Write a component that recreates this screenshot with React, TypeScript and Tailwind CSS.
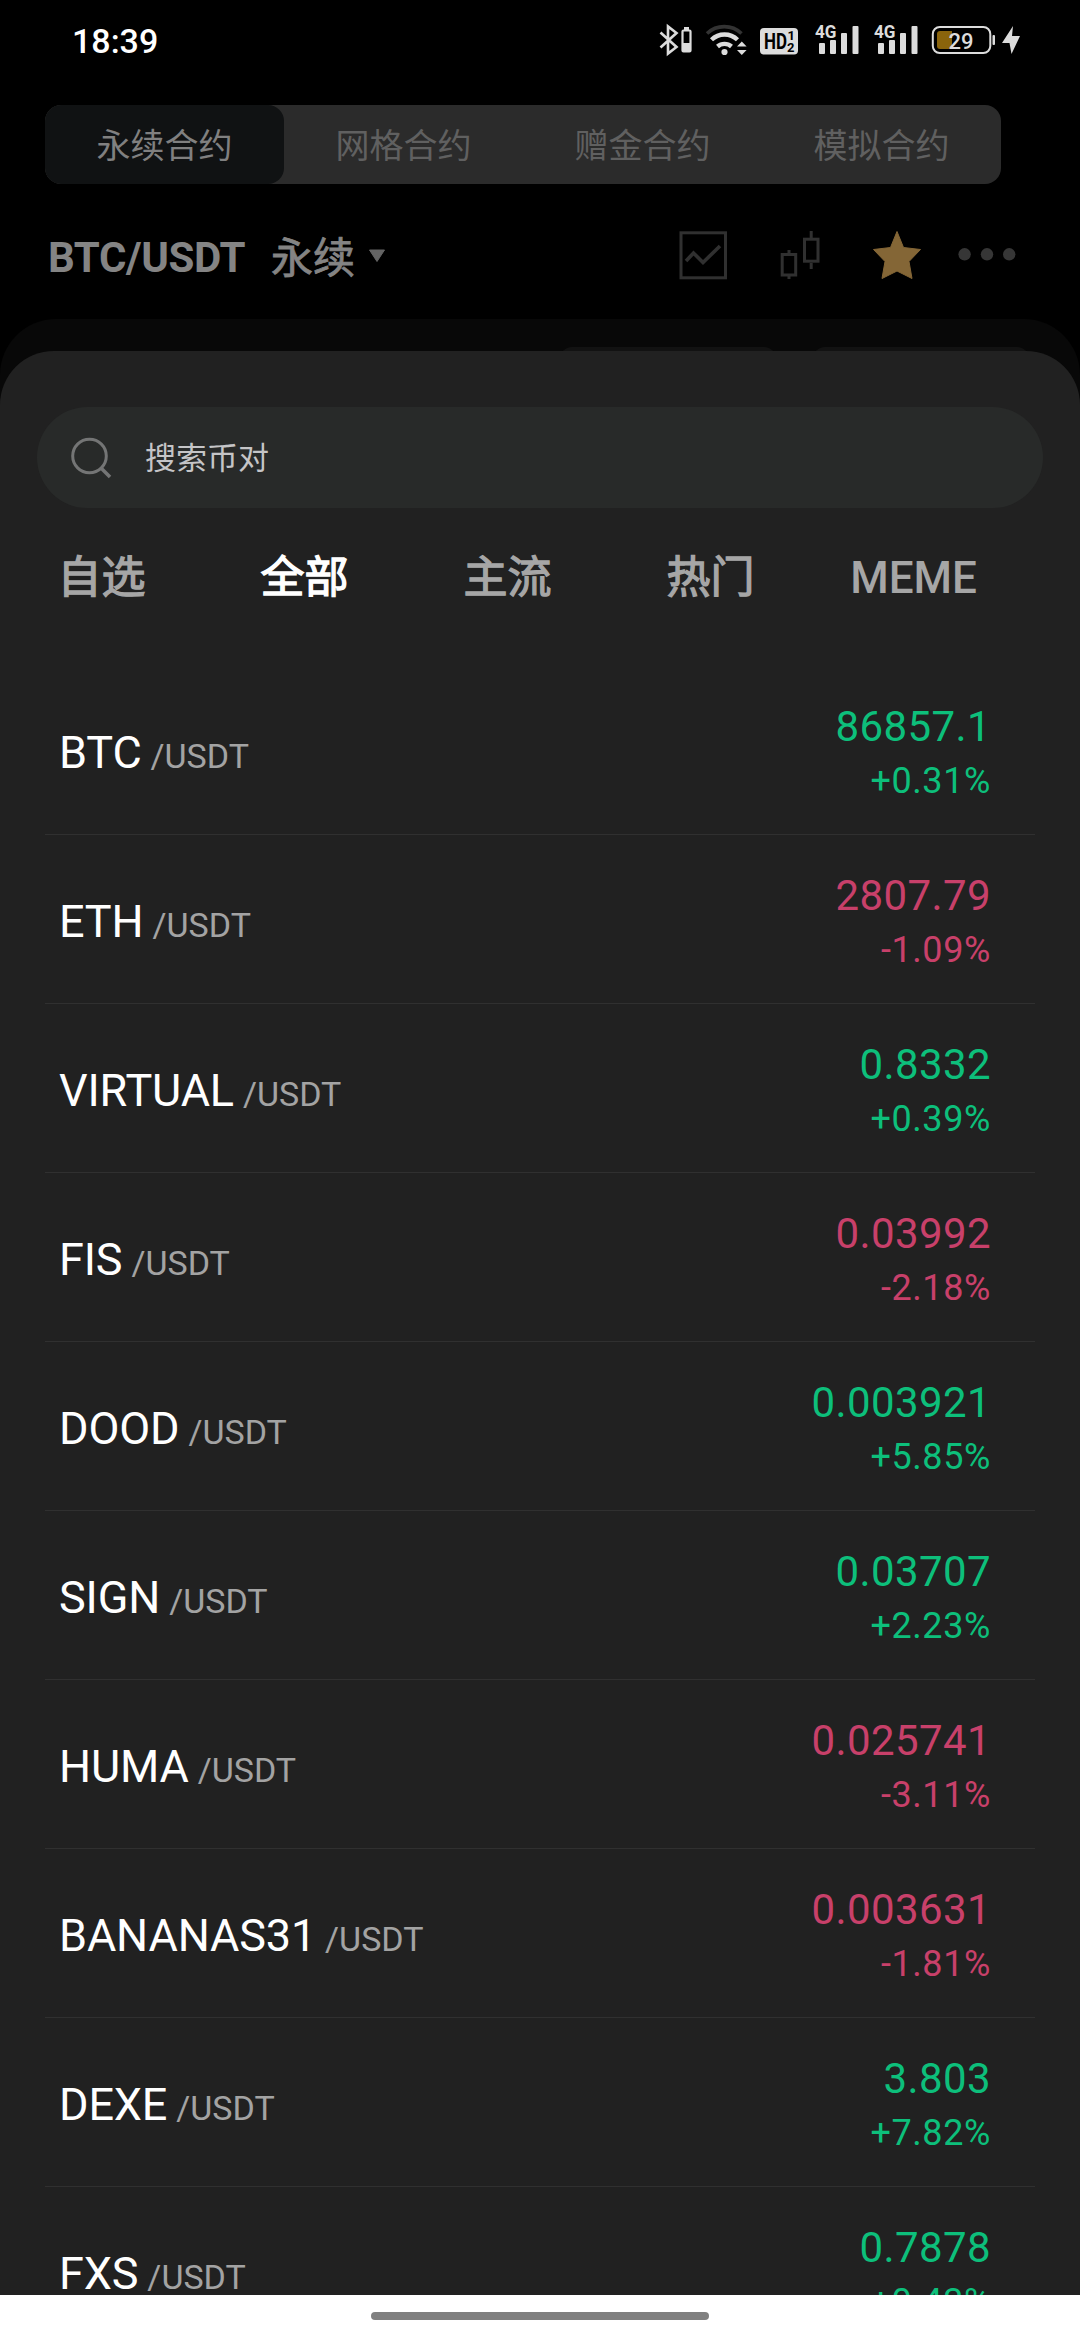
import React, { useState } from "react";

interface Pair {
  symbol: string;
  price: string;
  change: string;
}

const pairs: Pair[] = [
  { symbol: "BTC", price: "86857.1", change: "+0.31%" },
  { symbol: "ETH", price: "2807.79", change: "-1.09%" },
  { symbol: "VIRTUAL", price: "0.8332", change: "+0.39%" },
  { symbol: "FIS", price: "0.03992", change: "-2.18%" },
  { symbol: "DOOD", price: "0.003921", change: "+5.85%" },
  { symbol: "SIGN", price: "0.03707", change: "+2.23%" },
  { symbol: "HUMA", price: "0.025741", change: "-3.11%" },
  { symbol: "BANANAS31", price: "0.003631", change: "-1.81%" },
  { symbol: "DEXE", price: "3.803", change: "+7.82%" },
  { symbol: "FXS", price: "0.7878", change: "+0.43%" },
];

const contractTabs = ["永续合约", "网格合约", "赠金合约", "模拟合约"];
const categories = ["自选", "全部", "主流", "热门", "MEME"];

// --- Status bar ---
const StatusIcons = () => (
  <svg width="380" height="40" viewBox="650 20 380 40" fill="none">
    {/* Bluetooth + device battery */}
    <path d="M660.5 32.5 L676.5 47 L668 53.5 V26.5 L676.5 33 L660.5 47.5" stroke="#dcdcdc" strokeWidth="2.6" />
    <rect x="682.5" y="30.5" width="8" height="21" rx="1" stroke="#dcdcdc" strokeWidth="2.2" />
    <rect x="684" y="27" width="5" height="3" fill="#dcdcdc" />
    <rect x="682.5" y="43" width="8" height="9" fill="#dcdcdc" />
    {/* Wi-Fi */}
    <path d="M707 33.5 A25 25 0 0 1 741.5 33.5" stroke="#333333" strokeWidth="3.6" />
    <path d="M711.5 39.8 A18.5 18.5 0 0 1 737.5 39.8" stroke="#dcdcdc" strokeWidth="4.4" />
    <path d="M717.5 46.5 A10.5 10.5 0 0 1 731.5 46.5" stroke="#dcdcdc" strokeWidth="4.4" />
    <circle cx="724.5" cy="52" r="3.1" fill="#dcdcdc" />
    <path d="M737 46.5 L741.8 41.5 L746.6 46.5 Z M737 50 L741.8 55 L746.6 50 Z" fill="#dcdcdc" />
    {/* HD */}
    <rect x="760" y="28" width="38" height="26.5" rx="4" fill="#dcdcdc" />
    <text x="764" y="49" fill="#000" fontFamily="Roboto" fontWeight="700" fontSize="22" textLength="23" lengthAdjust="spacingAndGlyphs">HD</text>
    <text x="787.5" y="40" fill="#000" fontFamily="Roboto" fontWeight="700" fontSize="13">1</text>
    <text x="787" y="51.5" fill="#000" fontFamily="Roboto" fontWeight="700" fontSize="13">2</text>
    {/* Signal x2 */}
    {[0, 59].map((dx) => (
      <g key={dx} transform={`translate(${dx} 0)`} fill="#dcdcdc">
        <text x="815" y="37.7" fontFamily="Roboto" fontWeight="700" fontSize="18.5" textLength="21.5" lengthAdjust="spacingAndGlyphs">4G</text>
        <rect x="819" y="43" width="6" height="11" rx="1" />
        <rect x="830" y="40" width="6" height="14" rx="1" />
        <rect x="841" y="33" width="6" height="21" rx="1" />
        <rect x="852.5" y="26" width="6" height="28" rx="1" />
      </g>
    ))}
    {/* Battery */}
    <rect x="932.8" y="27" width="57.5" height="26" rx="7" stroke="#dcdcdc" strokeWidth="2" />
    <path d="M940 31 H952 V49 H940 Q937 49 937 46 V34 Q937 31 940 31 Z" fill="#8a640c" />
    <rect x="992.5" y="35" width="2.5" height="10" rx="1" fill="#dcdcdc" />
    <text x="948.5" y="48.5" fill="#dcdcdc" fontFamily="Roboto" fontWeight="500" fontSize="22">29</text>
    <path d="M1013 26 L1002 43 H1009.5 L1011.5 54 L1020 36 H1012 Z" fill="#dcdcdc" />
  </svg>
);

const HeaderIcons = () => (
  <svg width="340" height="50" viewBox="678 230 340 50" fill="none">
    <rect x="681" y="232.8" width="44.5" height="45" stroke="#303030" strokeWidth="3" />
    <path d="M686 261 L693.5 253 L703 262.5 L720 246" stroke="#303030" strokeWidth="3.6" />
    <rect x="782.2" y="254.5" width="13.5" height="20.5" stroke="#303030" strokeWidth="3" />
    <path d="M789 250 V254 M789 276 V279 M811.2 231 V238 M811.2 263 V269" stroke="#303030" strokeWidth="3" />
    <rect x="804.5" y="239.2" width="13.5" height="22" stroke="#303030" strokeWidth="3" />
    <path
      d="M897 231.5 L903.5 247.5 L920.5 249.5 L909 261.5 L912 278.5 L897 271 L882 278.5 L885 261.5 L873.5 249.5 L890.5 247.5 Z"
      fill="#846636"
      stroke="#846636"
      strokeLinejoin="round"
    />
    <circle cx="964.6" cy="254.3" r="6.2" fill="#363636" />
    <circle cx="987" cy="254.3" r="6.2" fill="#363636" />
    <circle cx="1009.2" cy="254.3" r="6.2" fill="#363636" />
  </svg>
);

const PairRow = ({ pair }: { pair: Pair }) => (
  <div className="ml-[45px] mr-[45px] h-[169px] shrink-0 border-b-[1.5px] border-[#303030] pl-[14px] pr-[44px] flex justify-between">
    <div className="pt-[60px] flex items-baseline h-[53px] leading-[53px]">
      <span className="text-[45px] tracking-[-0.15px] text-white">{pair.symbol}</span>
      <span className="ml-[9px] text-[34px] text-[#a3a3a3]">/USDT</span>
    </div>
    <div className={`flex flex-col items-end ${pair.change.startsWith("+") ? "text-[#0dbf7b]" : "text-[#c8406a]"}`}>
      <span className="mt-[36px] text-[42px] leading-[50px] tracking-[0.4px]">{pair.price}</span>
      <span className="mt-[7px] text-[36px] leading-[44px] tracking-[0.6px]">{pair.change}</span>
    </div>
  </div>
);

const App = () => {
  const [active, setActive] = useState("全部");

  return (
    <div className="w-[1080px] h-[2340px] overflow-hidden bg-black flex flex-col font-['Roboto','Noto_Sans_CJK_SC',sans-serif]">
      <div className="h-[105px] shrink-0 flex justify-between pl-[72px] pr-[50px]">
        <span className="mt-[21px] text-[34px] leading-[40px] font-medium text-white">18:39</span>
        <div className="mt-[20px]">
          <StatusIcons />
        </div>
      </div>

      {/* Contract type switch */}
      <div className="ml-[45px] w-[956px] h-[79px] shrink-0 rounded-[16px] bg-[#2b2b2b] grid grid-cols-4 overflow-hidden">
        {contractTabs.map((tab, i) => (
          <div
            key={tab}
            className={`pt-[2px] flex items-center justify-center text-[34px] leading-none ${
              i === 0 ? "rounded-[16px] bg-[#101213] text-[#808080]" : "text-[#606060]"
            }`}
          >
            {tab}
          </div>
        ))}
      </div>

      {/* Pair header */}
      <div className="h-[135px] shrink-0 flex justify-between pl-[48px] pr-[62px]">
        <div className="flex text-[#848484]">
          <span className="mt-[49px] text-[42px] leading-[50px] font-bold tracking-[-0.4px]">BTC/USDT</span>
          <span className="mt-[50px] ml-[26px] text-[42px] leading-[50px] [-webkit-text-stroke:0.8px_#848484]">永续</span>
          <svg className="mt-[65px] ml-[13px]" width="18" height="14" viewBox="0 0 18 14">
            <path d="M1.5 1 H16.5 L9 12.5 Z" fill="#646464" stroke="#646464" strokeLinejoin="round" />
          </svg>
        </div>
        <div className="mt-[46px]">
          <HeaderIcons />
        </div>
      </div>

      {/* Dimmed trading panel peeking out above the sheet */}
      <div className="h-[120px] -mb-[88px] shrink-0 rounded-t-[56px] bg-[#080808] flex pt-[28px] pl-[560px] gap-[37px]">
        <div className="w-[216px] h-[60px] rounded-[12px] bg-[#121212]" />
        <div className="w-[216px] h-[60px] rounded-[12px] bg-[#121212]" />
      </div>

      {/* Pair picker sheet */}
      <div className="relative h-[1944px] shrink-0 rounded-t-[54px] bg-[#212121] overflow-hidden flex flex-col">
        <div className="mt-[56px] mx-[37px] h-[101px] shrink-0 rounded-full bg-[#282a29] flex items-center pl-[33px]">
          <svg width="44" height="44" viewBox="0 0 44 44" fill="none" stroke="#747575" strokeWidth="3">
            <circle cx="19.5" cy="20" r="16.8" />
            <path d="M31 32 L40 41" strokeWidth="3.6" />
          </svg>
          <span className="mt-[4px] ml-[31px] text-[31px] text-[#c5c5c7]">搜索币对</span>
        </div>

        <div className="mt-[38px] w-[1015px] h-[64px] shrink-0 grid grid-cols-5 items-center text-center">
          {categories.map((cat) => (
            <button
              key={cat}
              onClick={() => setActive(cat)}
              className={`text-[44px] leading-[64px] [-webkit-text-stroke-color:currentColor] ${
                active === cat ? "text-white" : "text-[#a6a6a6]"
              } ${cat === "MEME" ? "font-medium" : "[-webkit-text-stroke-width:1.3px]"}`}
            >
              {cat}
            </button>
          ))}
        </div>

        <div className="mt-[56px] flex flex-col">
          {pairs.map((pair) => (
            <PairRow key={pair.symbol} pair={pair} />
          ))}
        </div>
      </div>

      {/* Gesture bar */}
      <div className="h-[45px] shrink-0 bg-white flex justify-center pt-[17px]">
        <div className="w-[338px] h-[8px] rounded-full bg-[#808080]" />
      </div>
    </div>
  );
};

export default App;
